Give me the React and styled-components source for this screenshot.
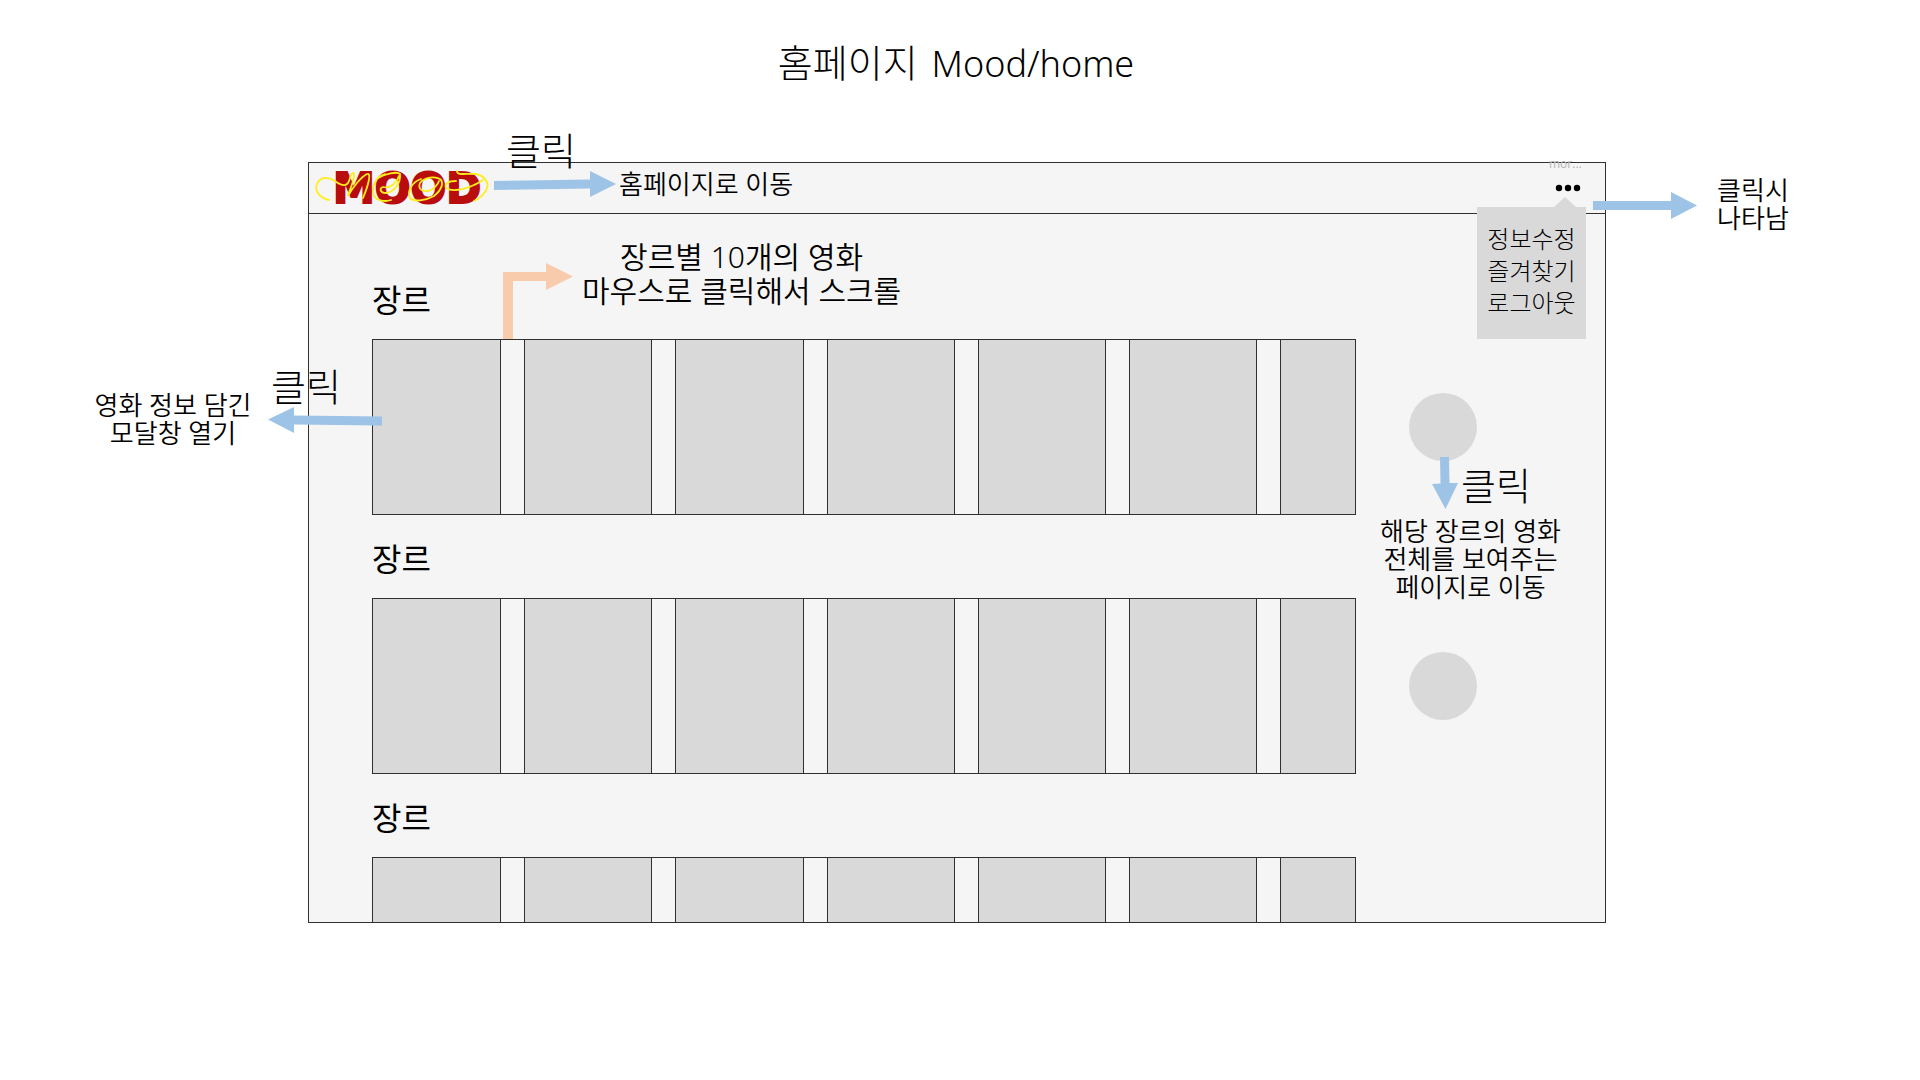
import React from "react";
import styled, { createGlobalStyle } from "styled-components";

const BLUE = "#9dc3e6";
const PEACH = "#f8cbad";
const LINE = "#303030";
const GREY = "#d9d9d9";

const GlobalStyle = createGlobalStyle`
  *, *::before, *::after { box-sizing: border-box; }
  body {
    margin: 0;
    background: #fff;
    color: #000;
    font-family: "Noto Sans", "Noto Sans CJK KR", sans-serif;
  }
  button { font: inherit; color: inherit; border: 0; padding: 0; background: none; cursor: pointer; }
`;

const Page = styled.div`
  min-height: 100vh;
  display: grid;
  grid-template-columns: 308px minmax(0, 1fr) 314px;
  grid-template-rows: 162px auto;
  align-content: start;
`;

const Title = styled.h1`
  grid-column: 1 / -1;
  margin: 0;
  padding: 34px 8px 0 0;
  text-align: center;
  font-size: 38px;
  line-height: 56px;
  font-weight: 300;
`;

const Latin = styled.span`
  margin-left: 4px;
  font-size: 36px;
`;

const SideNote = styled.aside`
  padding: ${(p) => p.$pad};
`;

const Note = styled.p`
  margin: 0;
  text-align: center;
  white-space: pre-line;
  font-size: ${(p) => (p.$large ? 30 : 26)}px;
  line-height: ${(p) => (p.$large ? 34 : 28)}px;
  font-weight: 350;
`;

const HomeNote = styled(Note)`
  margin: 0 0 8px 2px;
`;

const Frame = styled.main`
  background: #f5f5f5;
  border: 1px solid ${LINE};
`;

const TopBar = styled.header`
  position: relative;
  display: flex;
  align-items: center;
  justify-content: space-between;
  height: 51px;
  padding: 0 20px 0 4px;
  border-bottom: 1px solid ${LINE};
`;

const LogoLink = styled.a`
  display: block;
  width: 180px;
  height: 48px;
`;

const Brand = styled.div`
  display: flex;
  align-items: center;
`;

const HomeArrow = styled.svg`
  display: block;
  width: 124px;
  height: 28px;
  margin-bottom: 8px;
`;

const MoreArea = styled.div`
  position: relative;
  display: flex;
`;

const MoreButton = styled.button`
  display: grid;
  place-items: center;
  width: 34px;
  height: 30px;
`;

const MoreLabel = styled.span`
  position: absolute;
  left: -2px;
  top: -17px;
  font-family: "Open Sans", sans-serif;
  font-size: 12px;
  line-height: 16px;
  color: #b3b3b3;
`;

const Menu = styled.nav`
  position: absolute;
  right: -1px;
  top: 34px;
  width: 109px;
  padding: 16px 0 20px;
  display: flex;
  flex-direction: column;
  align-items: center;
  background: ${GREY};

  &::before {
    content: "";
    position: absolute;
    right: 10px;
    top: -10px;
    border: 11px solid transparent;
    border-top: 0;
    border-bottom: 10px solid ${GREY};
  }
`;

const MenuItem = styled.button`
  font-size: 24px;
  line-height: 32px;
  font-weight: 300;
`;

const Overlay = styled.div`
  position: absolute;
  left: ${(p) => p.$x}px;
  top: ${(p) => p.$y}px;
  z-index: 2;
  pointer-events: none;
  svg { display: block; }
`;

const RightOverlay = styled(Overlay)`
  left: auto;
  right: ${(p) => p.$x}px;
`;

const Click = styled.span`
  display: block;
  font-size: 38px;
  line-height: 40px;
  font-weight: 300;
  white-space: nowrap;
`;

const Genres = styled.div`
  display: flex;
  flex-direction: column;
  gap: 22px;
  padding: 64px 0 0 63px;
`;

const Genre = styled.section`
  position: relative;
`;

const GenreName = styled.h2`
  margin: 0 0 17px;
  font-size: 32px;
  line-height: 44px;
  font-weight: 400;
`;

const GenreRow = styled.div`
  display: grid;
  grid-template-columns: minmax(0, 1fr) 68px;
  column-gap: 53px;
  align-items: center;
  padding-right: 128px;
`;

const Strip = styled.div`
  display: grid;
  grid-template-columns: repeat(6, 12fr) 7fr;
  column-gap: 23px;
  height: ${(p) => (p.$cut ? 65 : 176)}px;
  border: 1px solid ${LINE};
  border-bottom-width: ${(p) => (p.$cut ? 0 : 1)}px;
`;

const Movie = styled.button`
  background: ${GREY};
  border-right: 1px solid ${LINE};
  border-left: 1px solid ${LINE};

  &:first-child { border-left: 0; }
  &:last-child { border-right: 0; }
`;

const MoreCircle = styled.button`
  width: 68px;
  height: 68px;
  border-radius: 50%;
  background: ${GREY};
`;

function Logo() {
  return (
    <svg width="180" height="48" viewBox="0 0 180 48" role="img" aria-label="MOOD">
      <text
        x="94"
        y="39"
        textAnchor="middle"
        fontFamily="DejaVu Sans, sans-serif"
        fontWeight="700"
        fontSize="42"
        fill="#b90c0c"
        stroke="#b90c0c"
        strokeWidth="2"
      >
        MOOD
      </text>
      <g fill="none" stroke="#ffee1e" strokeWidth="1.8" strokeLinecap="round">
        <path d="M16 36C7 34 1 27 4 20C7 13 14 12 22 17C30 23 35 23 37 14C38 9 41 7 41 11C41 18 36 27 35 32C40 23 48 13 54 10C59 8 55 22 50 34" />
        <path d="M72 10C62 13 58 24 61 32C64 37 72 38 78 36" />
        <path d="M65 14C72 10 84 7 87 10C88 19 81 28 73 29C67 29 66 24 70 23C78 25 84 18 86 12" />
        <path d="M108 15C99 18 94 27 97 34C101 38 112 37 121 32C129 26 131 18 127 15C122 12 112 13 107 19C105 24 108 28 115 27C121 26 125 20 126 17" />
        <path d="M144 7C144 12 154 9 163 10C172 12 176 19 174 24C172 30 167 34 161 37" />
        <path d="M170 16C158 24 141 29 133 24C131 19 136 17 143 17" />
      </g>
    </svg>
  );
}

const movies = ["1", "2", "3", "4", "5", "6", "7"];

function GenreSection({ cut, children }) {
  return (
    <Genre>
      <GenreName>장르</GenreName>
      <GenreRow>
        <Strip $cut={cut}>
          {movies.map((n) => (
            <Movie key={n} type="button" aria-label={"영화 " + n} />
          ))}
        </Strip>
        {!cut && <MoreCircle type="button" aria-label="장르 전체 보기" />}
      </GenreRow>
      {children}
    </Genre>
  );
}

export default function App() {
  return (
    <>
      <GlobalStyle />
      <Page>
        <Title>
          홈페이지 <Latin>Mood/home</Latin>
        </Title>

        <SideNote $pad="229px 0 0 38px">
          <Note>{"영화 정보 담긴\n모달창 열기"}</Note>
        </SideNote>

        <Frame>
          <TopBar>
            <Brand>
              <LogoLink href="#home">
                <Logo />
              </LogoLink>
              <HomeArrow viewBox="0 0 124 28" aria-hidden="true">
                <path d="M1 11L97 9.500V1L123 14L97 27V18.500L1 20Z" fill={BLUE} />
              </HomeArrow>
              <HomeNote>홈페이지로 이동</HomeNote>
            </Brand>
            <Overlay $x={197} $y={-33}>
              <Click>클릭</Click>
            </Overlay>

            <MoreArea>
              <MoreLabel>mor...</MoreLabel>
              <MoreButton type="button" aria-label="더보기">
                <svg width="26" height="8" viewBox="0 0 26 8" aria-hidden="true">
                  <circle cx="4" cy="4" r="3.200" />
                  <circle cx="13" cy="4" r="3.200" />
                  <circle cx="22" cy="4" r="3.200" />
                </svg>
              </MoreButton>
              <Menu>
                <MenuItem type="button">정보수정</MenuItem>
                <MenuItem type="button">즐겨찾기</MenuItem>
                <MenuItem type="button">로그아웃</MenuItem>
              </Menu>
            </MoreArea>
            <RightOverlay $x={-93} $y={28}>
              <svg width="105" height="28" viewBox="0 0 105 28" aria-hidden="true">
                <path d="M0 10H78V1L104 14.500L78 28V19H0Z" fill={BLUE} />
              </svg>
            </RightOverlay>
          </TopBar>

          <Genres>
            <GenreSection>
              <Overlay $x={131} $y={-16}>
                <svg width="71" height="77" viewBox="0 0 71 77" aria-hidden="true">
                  <path d="M0 77V10H43V1L70 14.500L43 28V19H10V77Z" fill={PEACH} />
                </svg>
              </Overlay>
              <Overlay $x={210} $y={-38}>
                <Note $large>{"장르별 10개의 영화\n마우스로 클릭해서 스크롤"}</Note>
              </Overlay>
              <Overlay $x={-101} $y={88}>
                <Click>클릭</Click>
              </Overlay>
              <Overlay $x={-104} $y={128}>
                <svg width="115" height="28" viewBox="0 0 115 28" aria-hidden="true">
                  <path d="M0 13.500L26 1V9.500L114 10.500V19.500L26 18.500V27Z" fill={BLUE} />
                </svg>
              </Overlay>
              <RightOverlay $x={146} $y={179}>
                <svg width="28" height="53" viewBox="0 0 28 53" aria-hidden="true">
                  <path d="M9 0H18L18.500 26H27L14.500 52L1 27L9.500 26.500Z" fill={BLUE} />
                </svg>
              </RightOverlay>
              <RightOverlay $x={74} $y={187}>
                <Click>클릭</Click>
              </RightOverlay>
              <RightOverlay $x={44} $y={239}>
                <Note>{"해당 장르의 영화\n전체를 보여주는\n페이지로 이동"}</Note>
              </RightOverlay>
            </GenreSection>
            <GenreSection />
            <GenreSection cut />
          </Genres>
        </Frame>

        <SideNote $pad="14px 20px 0 0">
          <Note>{"클릭시\n나타남"}</Note>
        </SideNote>
      </Page>
    </>
  );
}
